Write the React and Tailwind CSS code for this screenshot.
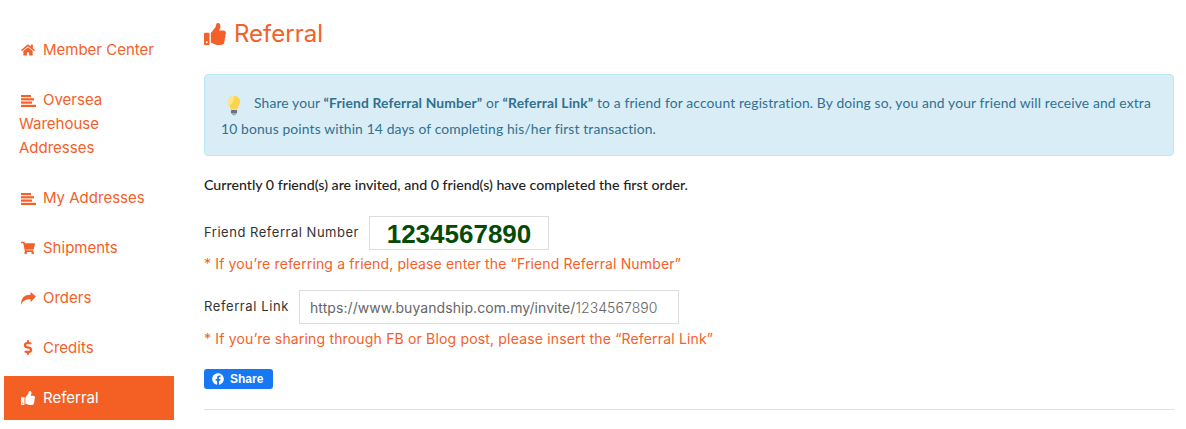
import { FaHome, FaShoppingCart, FaDollarSign, FaThumbsUp, FaFacebook } from "react-icons/fa";

const UI_FONT = "font-['Inter','Liberation_Sans',sans-serif]";

function ListIcon({ className }) {
  return (
    <svg viewBox="0 0 15 12" className={className} fill="currentColor">
      <rect x="0" y="0" width="10" height="2.2" />
      <rect x="0" y="3.2" width="13" height="2.2" />
      <rect x="0" y="6.5" width="11" height="2.2" />
      <rect x="0" y="9.8" width="15" height="2.2" />
    </svg>
  );
}

function ForwardIcon({ className }) {
  return (
    <svg viewBox="0 0 15 13" className={className} fill="currentColor">
      <path d="M15 4.6 9.6 0v2.7C3.6 2.7 0 5.6 0 13c1.6-4.3 4.6-5.7 9.6-5.7v2.9z" />
    </svg>
  );
}

function Bulb() {
  return (
    <svg viewBox="0 0 16 24" className="inline-block w-[16px] h-[21px] mr-[12px] ml-[5px] align-[-8px]">
      <path d="M8 1C3.8 1 1 4 1 7.6c0 3.4 3 5.4 3.4 9h7.2C12 13 15 11 15 7.6 15 4 12.2 1 8 1z" fill="#fcd34d" />
      <path d="M8 1C3.8 1 1 4 1 7.6c0 1.6.6 2.8 1.4 4C5 11 8 8 8 1z" fill="#fde68a" />
      <rect x="4.5" y="17" width="7" height="4" rx="1" fill="#6b7280" />
      <rect x="6" y="21" width="4" height="2" rx="1" fill="#9ca3af" />
    </svg>
  );
}

const menu = [
  { label: "Member Center", Icon: FaHome, size: "w-[14px] h-[14px]" },
  { label: "Oversea Warehouse Addresses", Icon: ListIcon, size: "w-[15px] h-[12px]" },
  { label: "My Addresses", Icon: ListIcon, size: "w-[15px] h-[12px]" },
  { label: "Shipments", Icon: FaShoppingCart, size: "w-[14px] h-[14px]" },
  { label: "Orders", Icon: ForwardIcon, size: "w-[15px] h-[13px]" },
  { label: "Credits", Icon: FaDollarSign, size: "w-[14px] h-[15px]" },
  { label: "Referral", Icon: FaThumbsUp, size: "w-[14px] h-[14px]", active: true },
];

function Sidebar() {
  return (
    <nav className={`w-[170px] ml-[4px] mr-[30px] pt-[28px] shrink-0 flex flex-col gap-[6px] text-[15px] leading-[24px] ${UI_FONT}`}>
      {menu.map(({ label, Icon, size, active }) => (
        <a
          key={label}
          className={`block pl-[15px] pr-[15px] py-[10px] ${active ? "bg-[#f46023] text-white" : "text-[#f4602a]"}`}
        >
          <span className="inline-block w-[24px] pl-[2px] align-[-2px]">
            <Icon className={size} />
          </span>
          {label}
        </a>
      ))}
    </nav>
  );
}

export default function App() {
  return (
    <div className="w-[1186px] h-[429px] overflow-hidden bg-white flex">
      <Sidebar />
      <main className="w-[970px] pt-[18px]">
        <h1 className={`flex items-center h-[32px] text-[24px] text-[#f4602a] ${UI_FONT}`}>
          <FaThumbsUp className="w-[22px] h-[22px] mr-[8px]" />
          Referral
        </h1>

        <div className="mt-[24px] h-[82px] rounded-[4px] border border-[#bce8f1] bg-[#d9edf7] px-[16px] pt-[15px] text-[13.85px] leading-[26px] tracking-[0.14px] text-[#31708f] font-['Lato','Open_Sans',sans-serif]">
          <Bulb />
          Share your <b>“Friend Referral Number”</b> or <b>“Referral Link”</b> to a friend for account registration. By
          doing so, you and your friend will receive and extra
          <br />
          10 bonus points within 14 days of completing his/her first transaction.
        </div>

        <p className="mt-[19px] text-[14.2px] leading-[20px] font-medium text-[#222] font-['Lato','Open_Sans',sans-serif]">
          Currently 0 friend(s) are invited, and 0 friend(s) have completed the first order.
        </p>

        <div className={`mt-[21px] flex items-center text-[13px] text-[#333] tracking-[0.52px] ${UI_FONT}`}>
          <span className="w-[165px]">Friend Referral Number</span>
          <div className="w-[180px] h-[34px] border border-[#ddd] text-center text-[26px] leading-[34px] font-bold text-[#054a05] tracking-normal font-['Liberation_Sans',sans-serif]">
            1234567890
          </div>
        </div>
        <p className={`mt-[4px] text-[14px] leading-[20px] text-[#f4602a] tracking-[0.14px] ${UI_FONT}`}>
          * If you’re referring a friend, please enter the “Friend Referral Number”
        </p>

        <div className={`mt-[16px] flex items-center text-[13px] text-[#333] tracking-[0.6px] ${UI_FONT}`}>
          <span className="w-[95px]">Referral Link</span>
          <div className="w-[380px] h-[34px] border border-[#ddd] px-[10px] text-[14px] leading-[34px] text-[#666] tracking-[0.07px]">
            https://www.buyandship.com.my/invite/<span className="font-light">1234567890</span>
          </div>
        </div>
        <p className={`mt-[5px] text-[14px] leading-[20px] text-[#f4602a] tracking-[0.17px] ${UI_FONT}`}>
          * If you’re sharing through FB or Blog post, please insert the “Referral Link”
        </p>

        <div className="mt-[20px] flex">
          <a className="flex items-center h-[20px] w-[69px] rounded-[3px] bg-[#1877f2] pl-[8px] text-white text-[12px] font-bold font-['Liberation_Sans',sans-serif]">
            <FaFacebook className="w-[12px] h-[12px] mr-[6px]" />
            Share
          </a>
        </div>

        <hr className="mt-[20px] border-t border-[#e0e0e0]" />
      </main>
    </div>
  );
}
